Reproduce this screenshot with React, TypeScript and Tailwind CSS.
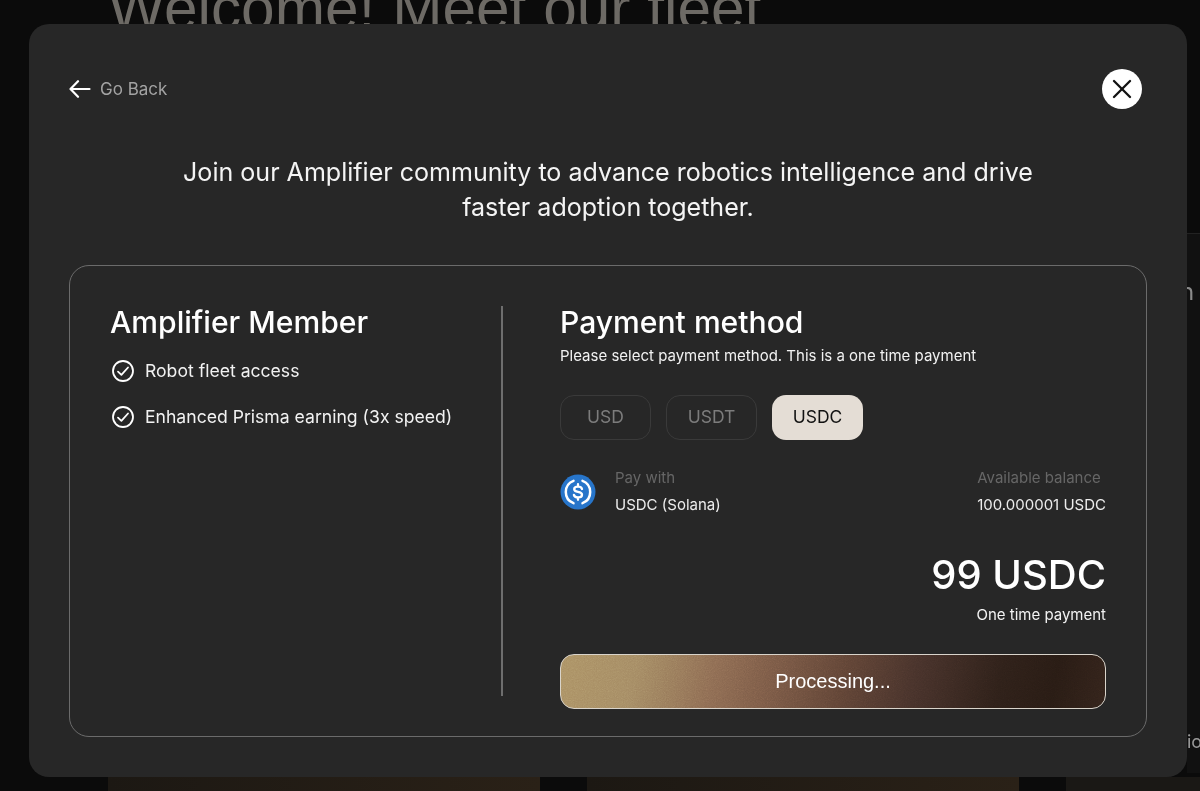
import { X } from "lucide-react";

function Usdc() {
  return (
    <svg width="36" height="36" viewBox="0 0 36 36" className="shrink-0">
      <circle cx="18" cy="18" r="17.5" fill="#2775ca" />
      <path d="M13.5 6.8a12 12 0 0 0 0 22.4" fill="none" stroke="#fff" strokeWidth="2.5" strokeLinecap="round" />
      <path d="M22.5 6.8a12 12 0 0 1 0 22.4" fill="none" stroke="#fff" strokeWidth="2.5" strokeLinecap="round" />
      <path d="M22 15c-.4-1.5-1.8-2.3-4-2.3-2.3 0-3.8 1-3.8 2.6 0 1.7 1.5 2.2 3.8 2.6 2.5.4 4 1 4 2.8 0 1.7-1.7 2.7-4 2.7-2.2 0-3.7-.9-4.1-2.5M18 10.2v2.5M18 23.4v2.4" fill="none" stroke="#fff" strokeWidth="2.3" strokeLinecap="round" />
    </svg>
  );
}

function Check() {
  return (
    <svg width="24" height="24" viewBox="0 0 24 24" fill="none" stroke="#ffffff" strokeWidth="1.8" strokeLinecap="round" strokeLinejoin="round" className="shrink-0">
      <circle cx="12" cy="12" r="10" />
      <path d="M7 12.6l3.4 3.3 6.6-7.4" />
    </svg>
  );
}

function Tab({ label, active }: { label: string; active?: boolean }) {
  return (
    <div
      className={
        active
          ? "w-[91px] h-[45px] rounded-[14px] flex items-center justify-center text-[17.5px] bg-[#e4ddd5] text-[#111111]"
          : "w-[91px] h-[45px] rounded-[14px] flex items-center justify-center text-[17.5px] border border-[#3a3a3a] bg-[#272727] text-[#7c7c7c]"
      }
    >
      {label}
    </div>
  );
}

function Feature({ label }: { label: string }) {
  return (
    <div className="flex items-center gap-[10px] h-[24px] pl-[1px]">
      <Check />
      <span className="text-[17.6px] text-[#f2f2f2]">{label}</span>
    </div>
  );
}

export default function App() {
  return (
    <div
      className="relative w-[1200px] h-[791px] overflow-hidden bg-[#0b0b0b]"
      style={{ fontFamily: "Inter, 'Liberation Sans', sans-serif" }}
    >
      <div
        className="absolute left-[108px] top-[-27px] text-[60.4px] leading-[70px] text-[#6d6a65] whitespace-nowrap"
        style={{ fontFamily: "'Liberation Sans', Arial, sans-serif" }}
      >
        Welcome! Meet our fleet
      </div>
      <div className="absolute left-[108px] top-[777px] w-[432px] h-[14px] bg-[linear-gradient(90deg,#1c1813,#2a2117)]" />
      <div className="absolute left-[587px] top-[777px] w-[432px] h-[14px] bg-[linear-gradient(90deg,#1c1813,#2a2117)]" />
      <div className="absolute left-[1066px] top-[777px] w-[134px] h-[14px] bg-[#1a1815]" />
      <div className="absolute left-[1187px] top-[233px] w-[13px] h-[540px] bg-[#111111] border-t border-[#222222]" />
      <div className="absolute left-[1187px] top-[278px] text-[24px] leading-[28px] text-[#8a8a8a] w-[13px] overflow-hidden">
        <span className="ml-[-7px]">n</span>
      </div>
      <div className="absolute left-[1187px] top-[728px] text-[18px] leading-[28px] text-[#9a9a9a] w-[13px] overflow-hidden whitespace-nowrap">
        io
      </div>

      <div className="absolute left-[29px] top-[24px] w-[1158px] h-[753px] rounded-[20px] bg-[#272727] pt-[45px] px-[40px] flex flex-col">
        <div className="flex items-center justify-between h-[40px] pr-[5px]">
          <div className="flex items-center gap-[9px]">
            <svg width="22" height="20" viewBox="0 0 22 20" fill="none" stroke="#ffffff" strokeWidth="2.2" strokeLinecap="round" strokeLinejoin="round">
              <path d="M20.5 10H1.5M9 2.2 1.5 10 9 17.8" />
            </svg>
            <span className="text-[17px] text-[#a3a3a3] mt-[1px]">Go Back</span>
          </div>
          <div className="w-[40px] h-[40px] rounded-full bg-white flex items-center justify-center">
            <X size={32} strokeWidth={1.75} className="text-[#111111]" />
          </div>
        </div>

        <p className="mt-[46px] text-[25.05px] leading-[35px] text-[#f4f4f4] text-center w-[1078px] px-[100px]">
          Join our Amplifier community to advance robotics intelligence and drive faster adoption together.
        </p>

        <div className="mt-[40px] w-[1078px] h-[472px] rounded-[20px] border border-[#6b6b6b] pt-[40px] px-[40px] flex">
          <div className="w-[393px] shrink-0 border-r-2 border-[#6e6e6e] h-[390px]">
            <h2 className="text-[30.1px] leading-[32px] font-medium text-white">Amplifier Member</h2>
            <div className="mt-[21px] flex flex-col gap-[22px]">
              <Feature label="Robot fleet access" />
              <Feature label="Enhanced Prisma earning (3x speed)" />
            </div>
          </div>
          <div className="ml-[57px] w-[546px] flex flex-col">
            <h2 className="text-[30.1px] leading-[32px] font-medium text-white">Payment method</h2>
            <p className="mt-[9px] text-[15px] leading-[18px] text-[#f2f2f2]">
              Please select payment method. This is a one time payment
            </p>
            <div className="mt-[30px] flex gap-[15px]">
              <Tab label="USD" />
              <Tab label="USDT" />
              <Tab label="USDC" active />
            </div>
            <div className="mt-[29px] flex items-center justify-between">
              <div className="flex items-center gap-[19px]">
                <Usdc />
                <div className="flex flex-col gap-[9px] text-[15px] leading-[18px]">
                  <span className="text-[#666666]">Pay with</span>
                  <span className="text-[#ececec]">USDC (Solana)</span>
                </div>
              </div>
              <div className="flex flex-col gap-[9px] text-[15px] leading-[18px]">
                <span className="text-[#666666]">Available balance</span>
                <span className="text-[#ececec]">100.000001 USDC</span>
              </div>
            </div>
            <div className="mt-[36px] text-right text-[40px] leading-[50px] font-medium text-white">99 USDC</div>
            <div className="mt-[6px] text-right text-[15px] leading-[18px] text-[#f2f2f2]">One time payment</div>
            <div
              className="relative overflow-hidden mt-[30px] h-[55px] shrink-0 rounded-[14px] border border-[#d9d4cb] flex items-center justify-center text-[20px] text-white bg-[linear-gradient(102deg,#ab9164_0%,#a48a63_14%,#8d6b52_28%,#775744_40%,#5f4335_52%,#46312a_65%,#2e2019_80%,#281b14_90%,#33231b_100%)]"
              style={{ fontFamily: "'Liberation Sans', Arial, sans-serif" }}
            >
              <svg className="absolute inset-0 w-full h-full opacity-25 mix-blend-overlay" aria-hidden="true">
                <filter id="grain">
                  <feTurbulence type="fractalNoise" baseFrequency="0.9" numOctaves="2" />
                  <feColorMatrix type="saturate" values="0" />
                </filter>
                <rect width="100%" height="100%" filter="url(#grain)" />
              </svg>
              <span className="relative mb-[2px]">Processing...</span>
            </div>
          </div>
        </div>
      </div>
    </div>
  );
}
